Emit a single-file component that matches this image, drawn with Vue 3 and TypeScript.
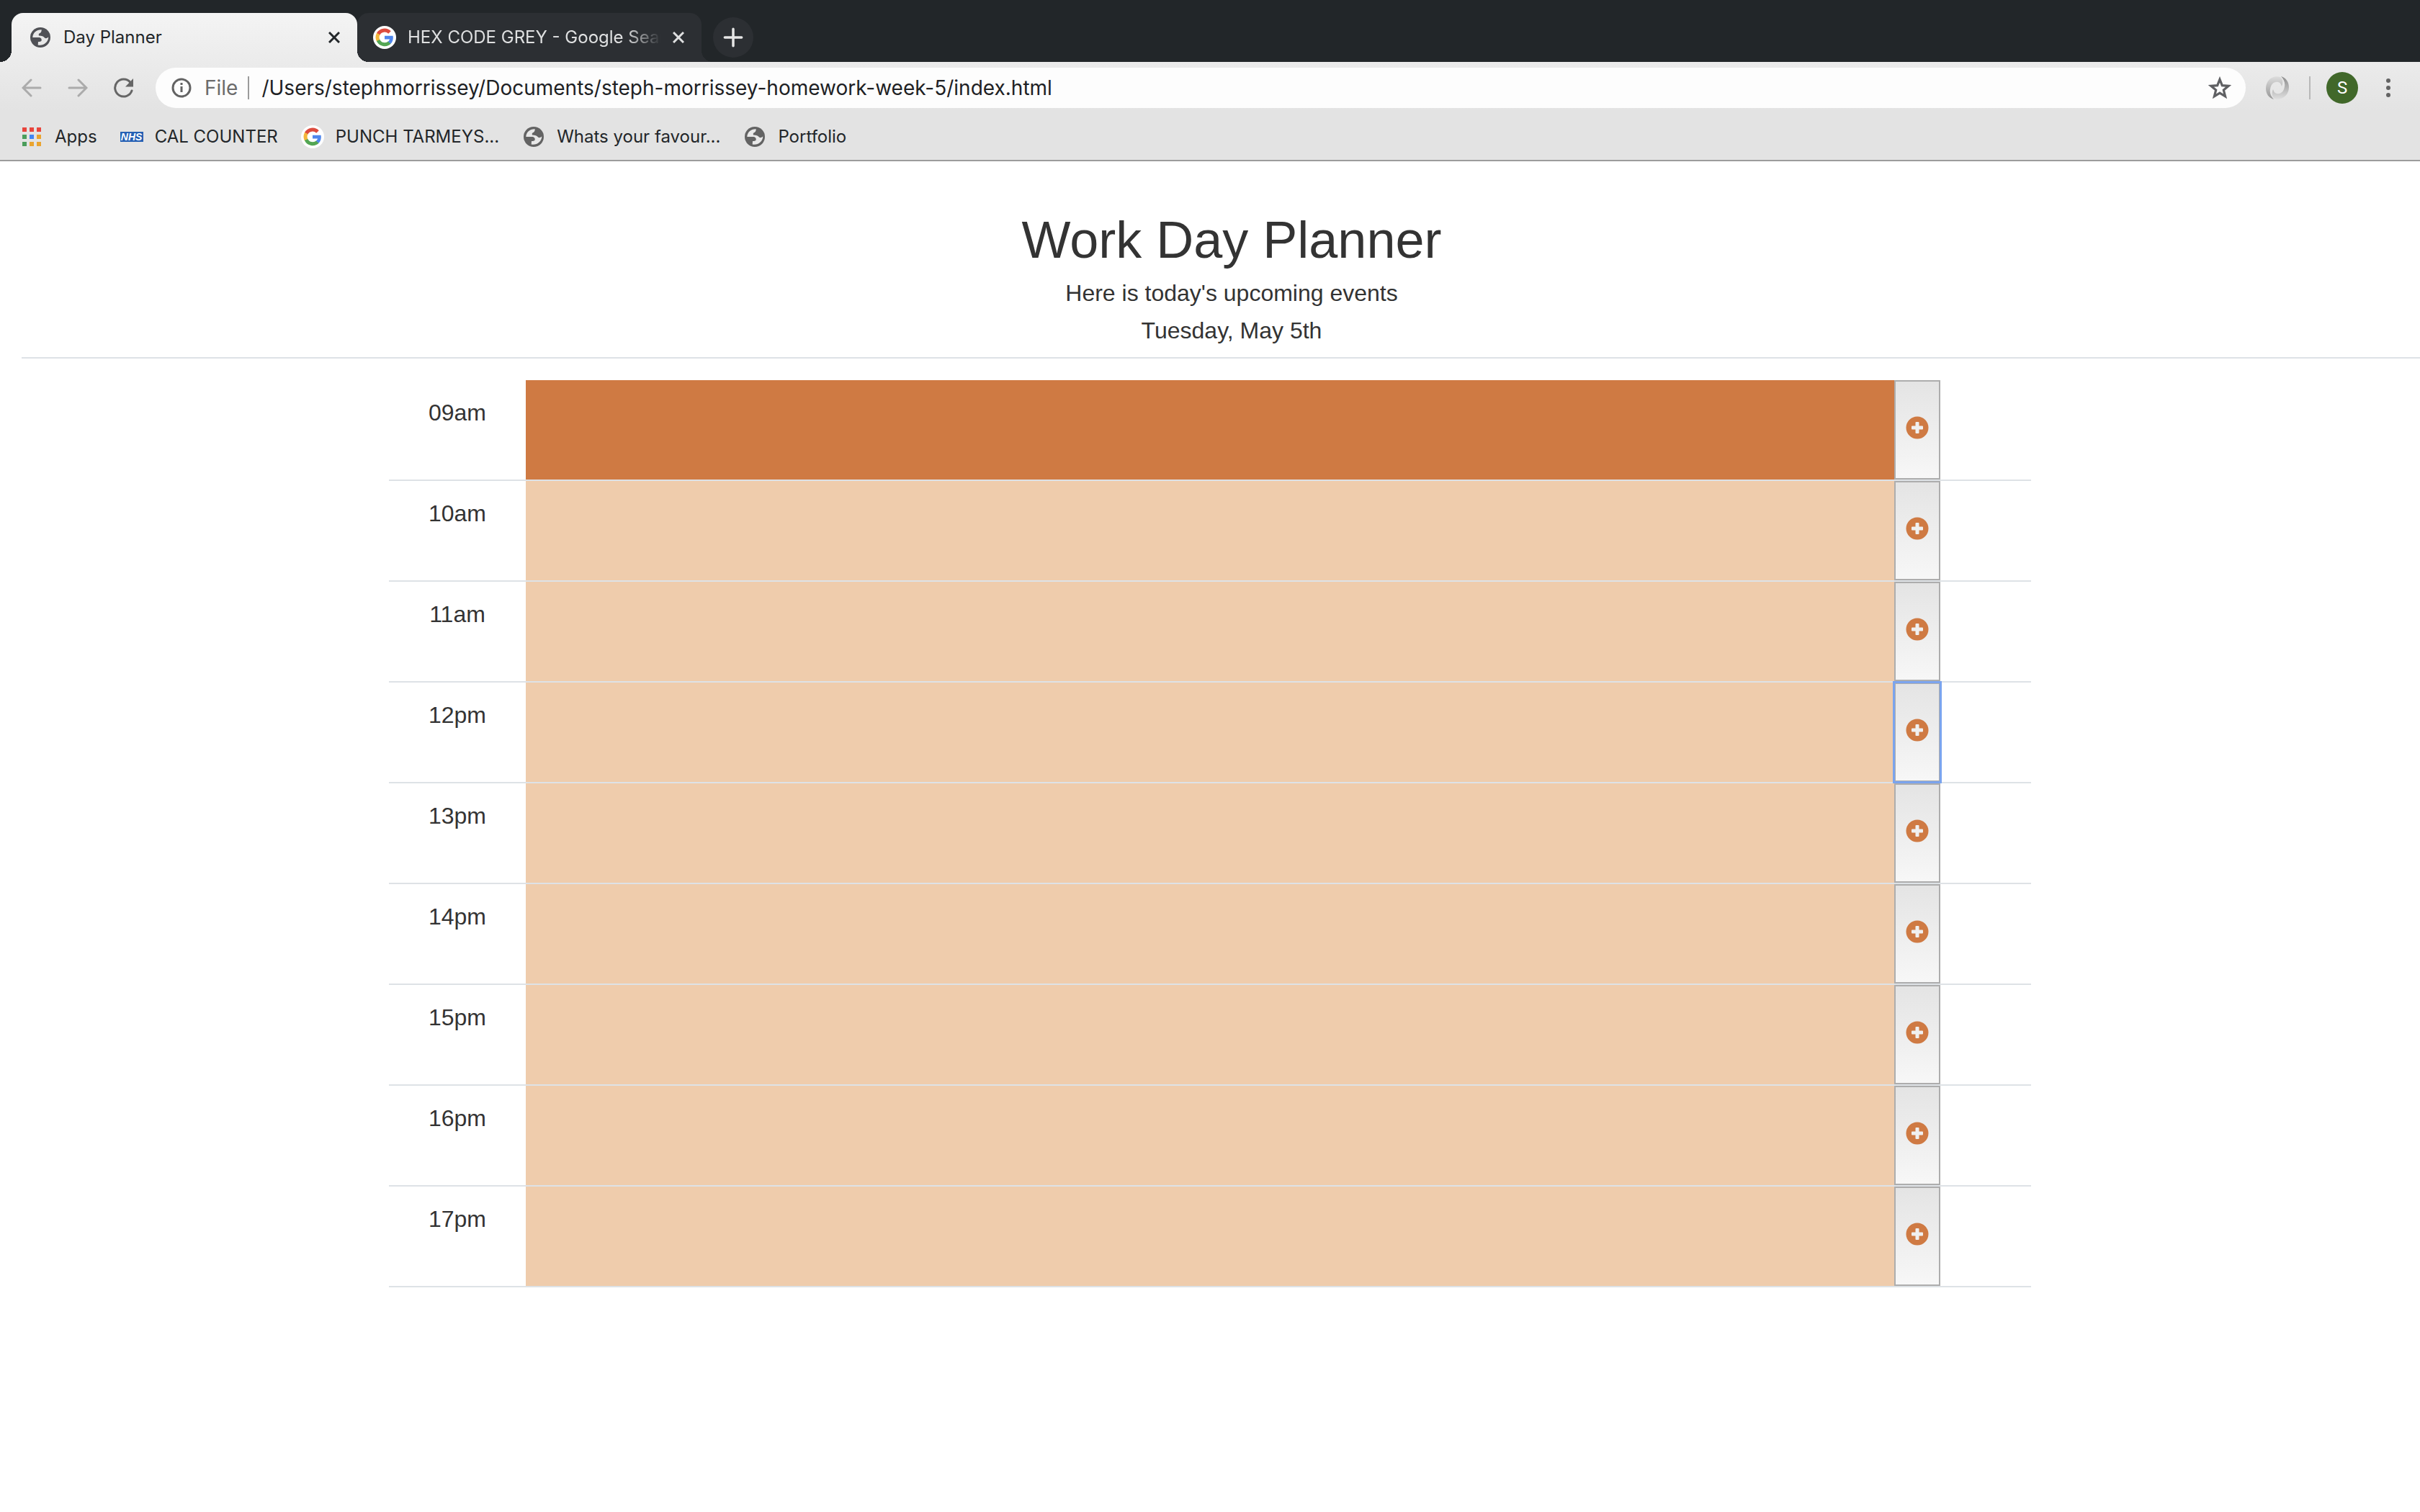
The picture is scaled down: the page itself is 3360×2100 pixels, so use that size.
<script setup lang="ts">
import { ref } from 'vue'

interface Bookmark {
  label: string
  icon: 'apps' | 'nhs' | 'google' | 'globe'
}

interface Slot {
  hour: string
  state: 'present' | 'future'
}

const bookmarks: Bookmark[] = [
  { label: 'Apps', icon: 'apps' },
  { label: 'CAL COUNTER', icon: 'nhs' },
  { label: 'PUNCH TARMEYS...', icon: 'google' },
  { label: 'Whats your favour...', icon: 'globe' },
  { label: 'Portfolio', icon: 'globe' },
]

const appColors = ['#e8453c', '#e8453c', '#e8453c', '#4a9d5b', '#4285f4', '#eaa42f', '#4a9d5b', '#eaa42f', '#eaa42f']

const hours = ['09am', '10am', '11am', '12pm', '13pm', '14pm', '15pm', '16pm', '17pm']
const slots: Slot[] = hours.map((hour, i) => ({ hour, state: i === 0 ? 'present' : 'future' }))

const address = ref('/Users/stephmorrissey/Documents/steph-morrissey-homework-week-5/index.html')
const selected = ref('12pm')
</script>

<template>
  <svg class="defs" aria-hidden="true">
    <symbol id="globe" viewBox="0 0 28 28">
      <circle cx="14" cy="14" r="14" fill="currentColor" />
      <path fill="#e8e8e8" d="M15.700 3.300C9 3 3.500 7.500 3.300 14H13q3 1 2.700 4-.2 2-4.700 2l-.3 4.500C18 26 25 21 25.300 13.500q-3.300 3-5.300 1-2-3-8-3-1-3 1.500-3.500 2.200-1 2.200-4.700z" />
    </symbol>
    <symbol id="google" viewBox="0 0 32 32">
      <circle cx="16" cy="16" r="16" fill="#fff" />
      <path fill="none" stroke="#dd4b3e" stroke-width="5" d="M7 11.500a10 10 0 0 1 16-2.500" />
      <path fill="none" stroke="#f4b73b" stroke-width="5" d="M7.300 20.500a10 10 0 0 1 0-9.500" />
      <path fill="none" stroke="#53a653" stroke-width="5" d="M23 23a10 10 0 0 1-15.900-3" />
      <path fill="#4f86ec" d="M16 13.800h11.600c.8 4.200-.3 8.200-3 11l-3.900-3c1.200-.8 2-1.900 2.300-3.300h-7z" />
    </symbol>
  </svg>

  <div class="window">
    <header class="chrome">
      <div class="tabstrip">
        <div class="tab active">
          <svg class="globe tab-globe"><use href="#globe" /></svg>
          <span class="tab-title">Day Planner</span>
          <button class="close" type="button" aria-label="Close tab">
            <svg viewBox="0 0 16 16"><path d="M1 1l14 14M15 1L1 15" /></svg>
          </button>
        </div>
        <div class="tab">
          <svg class="google"><use href="#google" /></svg>
          <span class="tab-title faded">HEX CODE GREY - Google Sear</span>
          <button class="close" type="button" aria-label="Close tab">
            <svg viewBox="0 0 16 16"><path d="M1 1l14 14M15 1L1 15" /></svg>
          </button>
        </div>
        <button class="new-tab" type="button" aria-label="New tab">
          <svg viewBox="0 0 24 24"><path d="M12 2v20M2 12h20" /></svg>
        </button>
      </div>

      <div class="panel">
        <div class="toolbar">
          <button class="nav dim" type="button" aria-label="Back">
            <svg viewBox="0 0 28 28"><path d="M26 14H3M13 3L2 14l11 11" /></svg>
          </button>
          <button class="nav dim" type="button" aria-label="Forward">
            <svg viewBox="0 0 28 28"><path d="M2 14h23M15 3l11 11-11 11" /></svg>
          </button>
          <button class="nav" type="button" aria-label="Reload">
            <svg viewBox="0 0 28 28">
              <path d="M23 6.500A12 12 0 1 0 25 18" />
              <path class="solid" d="M27 1v11.500H16z" />
            </svg>
          </button>
          <div class="omnibox">
            <svg class="info" viewBox="0 0 28 28">
              <circle cx="14" cy="14" r="12" />
              <path d="M14 12v8M14 7v3" />
            </svg>
            <label class="scheme" for="address">File</label>
            <input id="address" v-model="address" type="text" spellcheck="false" />
            <button class="star" type="button" aria-label="Bookmark this page">
              <svg viewBox="0 0 30 30">
                <path d="M15 4l3.100 7.900 8.400.6-6.500 5.400 2.100 8.200-7.100-4.500-7.100 4.500 2.100-8.200-6.500-5.400 8.400-.6z" />
              </svg>
            </button>
          </div>
          <svg class="extension" viewBox="0 0 32 32">
            <defs>
              <linearGradient id="ring-a" x1="0" y1="0" x2="0" y2="1">
                <stop offset="0" stop-color="#dcdcdc" /><stop offset="1" stop-color="#969696" />
              </linearGradient>
              <linearGradient id="ring-b" x1="0" y1="1" x2="0" y2="0">
                <stop offset="0" stop-color="#dedede" /><stop offset="1" stop-color="#8c8c8c" />
              </linearGradient>
            </defs>
            <path fill="url(#ring-b)" d="M12 31C23 34 32 26 32 15 32 8 28 2 21 0c4 4 6 9 5 14-1 7-5 11-11 10-3-.5-4-3-5-6-2 5-2 10 2 13z" />
            <path fill="url(#ring-a)" d="M20 1C9-2 0 6 0 17c0 7 4 13 11 15-4-4-6-9-5-14C7 11 11 7 17 8c3 .5 4 3 5 6 2-5 2-10-2-13z" />
          </svg>
          <span class="divider"></span>
          <button class="avatar" type="button" aria-label="Profile">S</button>
          <button class="menu" type="button" aria-label="Menu">
            <svg viewBox="0 0 6 26"><circle cx="3" cy="3" r="3" /><circle cx="3" cy="13" r="3" /><circle cx="3" cy="23" r="3" /></svg>
          </button>
        </div>

        <nav class="bookmarks">
          <a v-for="mark in bookmarks" :key="mark.label" href="#">
            <span class="favicon">
              <span v-if="mark.icon === 'apps'" class="grid">
                <i v-for="(color, n) in appColors" :key="n" :style="{ background: color }"></i>
              </span>
              <span v-else-if="mark.icon === 'nhs'" class="nhs-logo">NHS</span>
              <svg v-else-if="mark.icon === 'google'" class="google"><use href="#google" /></svg>
              <svg v-else class="globe"><use href="#globe" /></svg>
            </span>
            <span>{{ mark.label }}</span>
          </a>
        </nav>
      </div>
    </header>

    <main>
      <section class="intro">
        <h1>Work Day Planner</h1>
        <p>Here is today's upcoming events</p>
        <p>Tuesday, May 5th</p>
      </section>

      <section class="planner">
        <div v-for="slot in slots" :key="slot.hour" class="row">
          <label class="hour" :for="'slot-' + slot.hour">{{ slot.hour }}</label>
          <textarea :id="'slot-' + slot.hour" :class="slot.state"></textarea>
          <button
            class="save"
            :class="{ focused: selected === slot.hour }"
            type="button"
            :aria-label="'Save ' + slot.hour"
            @click="selected = slot.hour"
          >
            <svg viewBox="0 0 32 32">
              <circle cx="16" cy="16" r="15.500" />
              <path d="M14.500 8h3q1 0 1 1v4.500H23q1 0 1 1v3q0 1-1 1h-4.500V23q0 1-1 1h-3q-1 0-1-1v-4.500H9q-1 0-1-1v-3q0-1 1-1h4.500V9q0-1 1-1z" />
            </svg>
          </button>
        </div>
      </section>
    </main>
  </div>
</template>

<style>
body {
  background: #fff;
}
</style>

<style scoped>
* {
  box-sizing: border-box;
}

.defs {
  position: absolute;
  width: 0;
  height: 0;
}

.window {
  overflow-x: hidden;
  color: #333;
  font-family: "Liberation Sans", Arial, sans-serif;
}

button {
  display: flex;
  align-items: center;
  justify-content: center;
  margin: 0;
  padding: 0;
  border: 0;
  background: none;
  font: inherit;
}

svg {
  display: block;
  flex: none;
}

.chrome {
  background: #222629;
  color: #222629;
  font-family: Inter, "Noto Sans", sans-serif;
  font-size: 24px;
}

.tabstrip {
  display: flex;
  align-items: flex-end;
  height: 86px;
  padding-left: 16px;
}

.tab {
  position: relative;
  display: flex;
  align-items: center;
  width: 478px;
  height: 68px;
  padding: 0 24px 0 22px;
  border-radius: 16px 16px 0 16px;
  background: #2c2f33;
  color: #dfe0e1;
}

.tab::after,
.tab.active::before {
  content: "";
  position: absolute;
  bottom: 0;
  width: 16px;
  height: 16px;
}

.tab::after {
  left: 100%;
  background: radial-gradient(circle at 100% 0, transparent 16px, #2c2f33 16px);
}

.tab.active {
  width: 480px;
  padding-left: 26px;
  border-radius: 16px 16px 0 0;
  background: linear-gradient(#f4f4f4, #ebebeb);
  color: #222629;
}

.tab.active::before {
  right: 100%;
  background: radial-gradient(circle at 0 0, transparent 16px, #ebebeb 16px);
}

.tab.active::after {
  background: radial-gradient(circle at 100% 0, transparent 16px, #ebebeb 16px);
}

.tab-title {
  flex: 1;
  margin: 0 16px;
  line-height: 28px;
  white-space: nowrap;
}

.tab.active .tab-title {
  margin-left: 18px;
}

.faded {
  min-width: 0;
  mask-image: linear-gradient(to right, #000 86%, transparent);
}

.globe {
  width: 28px;
  height: 28px;
  color: #636363;
}

.tab-globe {
  color: #505156;
}

.google {
  width: 32px;
  height: 32px;
}

.close {
  color: inherit;
}

.close svg {
  width: 16px;
  height: 16px;
  fill: none;
  stroke: currentColor;
  stroke-width: 3;
}

.new-tab {
  width: 56px;
  height: 56px;
  margin: 0 0 6px 16px;
  border-radius: 50%;
  background: #2c2f33;
}

.new-tab svg {
  width: 28px;
  height: 28px;
  stroke: #e6e6e6;
  stroke-width: 3;
  stroke-linecap: round;
}

.panel {
  border-bottom: 2px solid #9c9c9c;
  background: linear-gradient(#ebebeb, #e3e3e3 50%);
}

.toolbar {
  display: flex;
  align-items: center;
  height: 72px;
  padding: 0 41px 0 30px;
}

.nav {
  width: 28px;
  height: 28px;
  margin-right: 36px;
  color: #666;
}

.nav svg {
  width: 28px;
  height: 28px;
  fill: none;
  stroke: currentColor;
  stroke-width: 3;
  stroke-linecap: round;
}

.nav.dim {
  color: #ababab;
}

.nav .solid {
  fill: currentColor;
  stroke: none;
}

.omnibox {
  display: flex;
  flex: 1;
  align-items: center;
  height: 56px;
  margin-left: -6px;
  padding: 0 20px 0 22px;
  border-radius: 28px;
  background: #fdfdfd;
}

.info {
  width: 28px;
  height: 28px;
  fill: none;
  stroke: #636363;
  stroke-width: 3;
}

.scheme {
  margin-left: 18px;
  padding-right: 14px;
  border-right: 2px solid #9b9b9b;
  color: #6b6b6b;
  font-size: 28px;
  line-height: 32px;
}

#address {
  flex: 1;
  min-width: 0;
  padding: 0 0 0 17px;
  border: 0;
  outline: 0;
  background: none;
  color: #202124;
  font: inherit;
  font-size: 28px;
}

.star svg {
  width: 32px;
  height: 32px;
  fill: none;
  stroke: #5f6063;
  stroke-width: 3;
}

.extension {
  width: 32px;
  height: 32px;
  margin-left: 28px;
}

.divider {
  width: 2px;
  height: 32px;
  margin: 0 22px 0 28px;
  background: #b8b8b8;
}

.avatar {
  width: 44px;
  height: 44px;
  border-radius: 50%;
  background: #41682a;
  color: #fff;
  font-family: Roboto, sans-serif;
  font-size: 24px;
}

.menu {
  margin-left: 39px;
}

.menu svg {
  width: 6px;
  height: 26px;
  fill: #636363;
}

.bookmarks {
  display: flex;
  align-items: center;
  gap: 32px;
  height: 64px;
  padding-left: 28px;
}

.bookmarks a {
  display: flex;
  align-items: center;
  gap: 16px;
  color: inherit;
  line-height: 28px;
  text-decoration: none;
  white-space: nowrap;
}

.favicon {
  display: flex;
  justify-content: center;
  width: 32px;
}

.grid {
  display: grid;
  grid-template-columns: repeat(3, 6px);
  gap: 4px;
}

.grid i {
  height: 6px;
}

.nhs-logo {
  width: 32px;
  height: 14px;
  background: #2560b4;
  color: #fff;
  font-family: "Liberation Sans", Arial, sans-serif;
  font-size: 14px;
  font-style: italic;
  font-weight: 700;
  line-height: 14px;
  text-align: center;
}

.intro {
  margin-left: 30px;
  width: 100%;
  padding: 66px 0 11px;
  border-bottom: 2px solid #dee2e6;
  text-align: center;
}

h1 {
  margin: 0 0 5px;
  font-size: 72px;
  font-weight: 400;
  line-height: 86px;
}

p {
  margin: 0;
  font-size: 32px;
  line-height: 52px;
}

.planner {
  display: flex;
  flex-direction: column;
  width: 90%;
  max-width: 2280px;
  margin: 30px auto 60px;
}

.row {
  display: grid;
  grid-template-columns: 1fr 10fr 64px calc(100% / 12 - 64px);
  height: 140px;
  border-bottom: 2px solid #dee2e6;
}

.hour {
  padding-top: 20px;
  font-size: 32px;
  line-height: 50px;
  text-align: center;
}

textarea {
  display: block;
  width: 100%;
  height: 100%;
  margin: 0;
  padding: 12px;
  border: 0;
  outline: 0;
  border-radius: 0;
  resize: none;
  color: #333;
  font: inherit;
  font-size: 32px;
}

.present {
  background: #cf7a43;
}

.future {
  background: #efccac;
}

.save {
  padding-bottom: 6px;
  border: 2px solid #adadad;
  background: linear-gradient(#e4e4e4, #f7f7f7);
}

.save svg {
  width: 32px;
  height: 32px;
}

.save circle {
  fill: #cf7a43;
}

.save path {
  fill: #f0f0f0;
}

.save.focused {
  position: relative;
  outline: 3px solid #7ba4ee;
  outline-offset: -1px;
}
</style>
